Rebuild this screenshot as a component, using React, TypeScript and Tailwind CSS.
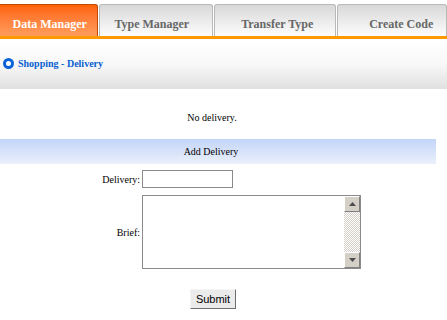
import type { ReactNode } from "react";

const serif = "font-['Liberation_Serif','Times_New_Roman',serif]";

interface TabProps {
	label: string;
	width: string;
	active?: boolean;
}

function Tab({ label, width, active }: TabProps) {
	if (active) {
		return (
			<div
				className={`${width} h-[32px] flex items-center justify-center pt-[6px] pl-[3px] rounded-tr-[3px] border-t border-r border-[#c04800] bg-gradient-to-b from-[#ff6200] to-[#ff9d5c] text-white text-[12px] font-bold`}
			>
				{label}
			</div>
		);
	}
	return (
		<div
			className={`${width} h-[32px] flex items-center justify-center pt-[6px] rounded-t-[3px] border-t border-x border-[#b9b9b9] bg-gradient-to-b from-[#d8d8d8] to-[#fdfdfd] text-[#676767] text-[12px] font-bold`}
		>
			{label}
		</div>
	);
}

function ScrollButton({ children }: { children: ReactNode }) {
	return (
		<div className="h-[16px] w-[16px] flex items-center justify-center bg-[#d4d0c8] border border-t-white border-l-white border-b-[#808080] border-r-[#808080]">
			{children}
		</div>
	);
}

export default function App() {
	return (
		<div className={`w-[447px] h-[320px] bg-white overflow-hidden ${serif}`}>
			{/* tabs */}
			<div className="flex items-end gap-[1px] h-[36px]">
				<Tab label="Data Manager" width="w-[98px]" active />
				<Tab label="Type Manager" width="w-[115px] pr-[8px]" />
				<Tab label="Transfer Type" width="w-[123px] pl-[4px]" />
				<Tab label="Create Code" width="w-[110px] pl-[18px]" />
			</div>
			<div className="h-[3px] bg-[#ff9900]" />

			{/* section header */}
			<div className="h-[50px] flex items-center gap-[4px] pl-[3px] pb-[1px] bg-gradient-to-b from-white via-[#f8f8f8] to-[#e0e0e0]">
				<span className="w-[11px] h-[11px] rounded-full border-[3px] border-[#0a62d8] bg-white" />
				<span className="text-[10px] font-bold text-[#0a5fd0]">Shopping - Delivery</span>
			</div>

			<div className="w-[424px] h-[50px] pt-[22px] text-center text-[10px] leading-[14px] text-black">
				No delivery.
			</div>

			<div className="w-[436px] h-[25px] flex items-center justify-center pr-[14px] bg-gradient-to-b from-[#c3d5f8] to-[#ebf0fb] text-[10px] text-black">
				Add Delivery
			</div>

			{/* form */}
			<div className="flex flex-col gap-[7px] pt-[6px] text-[10px] text-black">
				<div className="flex items-center">
					<label className="w-[140px] text-right">Delivery:</label>
					<input
						type="text"
						className="ml-[2px] w-[91px] h-[18px] border border-[#8a8a8a] bg-white outline-none"
					/>
				</div>
				<div className="flex items-center">
					<label className="w-[140px] text-right">Brief:</label>
					<div className="ml-[2px] w-[219px] h-[74px] flex border border-[#8a8a8a] bg-white">
						<textarea className="flex-1 resize-none outline-none bg-white" />
						<div className="w-[16px] flex flex-col">
							<ScrollButton>
								<svg width="7" height="4" viewBox="0 0 7 4">
									<path d="M3.5 0 L7 4 L0 4 Z" fill="#4d4d4d" />
								</svg>
							</ScrollButton>
							<div className="flex-1 bg-[repeating-conic-gradient(#d4d0c8_0%_25%,#ffffff_0%_50%)] bg-[length:2px_2px]" />
							<ScrollButton>
								<svg width="7" height="4" viewBox="0 0 7 4">
									<path d="M0 0 L7 0 L3.5 4 Z" fill="#4d4d4d" />
								</svg>
							</ScrollButton>
						</div>
					</div>
				</div>
			</div>

			<div className="pt-[17px] pl-[190px]">
				<button className="w-[46px] h-[20px] bg-[#ebebeb] border border-t-[#f4f4f4] border-l-[#f4f4f4] border-b-[#6f6f6f] border-r-[#6f6f6f] text-[11px] text-black font-['Liberation_Sans',Arial,sans-serif]">
					Submit
				</button>
			</div>
		</div>
	);
}
